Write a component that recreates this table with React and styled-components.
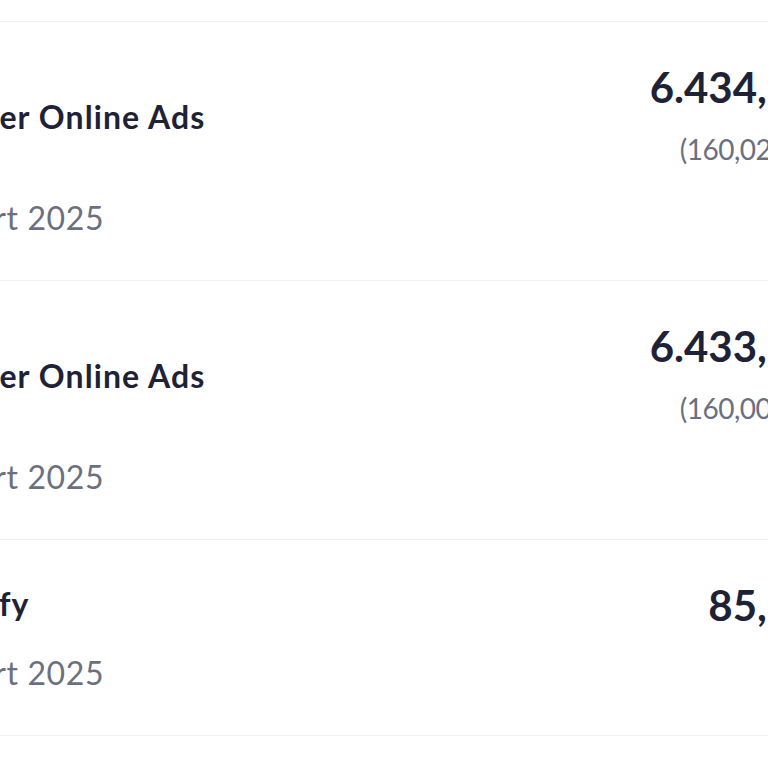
import styled, { createGlobalStyle } from "styled-components";

const GlobalStyle = createGlobalStyle`
  html, body {
    margin: 0;
    padding: 0;
    background: #ffffff;
    overflow: hidden;
  }
  body {
    font-family: "Lato", "Noto Sans", sans-serif;
  }
`;

const transactions = [
  {
    id: 1,
    title: "Twitter Online Ads",
    date: "5 Mart 2025",
    amount: "6.434,52₺",
    converted: "(160,02 USD)",
    offset: 36,
    gap: 63,
  },
  {
    id: 2,
    title: "Twitter Online Ads",
    date: "5 Mart 2025",
    amount: "6.433,72₺",
    converted: "(160,00 USD)",
    offset: 36,
    gap: 63,
  },
  {
    id: 3,
    title: "Spotify",
    date: "5 Mart 2025",
    amount: "85,99₺",
    offset: 5,
    gap: 31,
  },
];

function App() {
  return (
    <>
      <GlobalStyle />
      <Page>
        <List>
          {transactions.map((t) => (
            <Row key={t.id}>
              <Details $offset={t.offset} $gap={t.gap}>
                <Title>{t.title}</Title>
                <DateText>{t.date}</DateText>
              </Details>
              <Amounts>
                <Amount>{t.amount}</Amount>
                {t.converted && <Converted>{t.converted}</Converted>}
              </Amounts>
            </Row>
          ))}
        </List>
      </Page>
    </>
  );
}

export default App;

const Page = styled.div`
  width: 768px;
  height: 768px;
  overflow: hidden;
  padding-top: 21px;
  box-sizing: border-box;
`;

const List = styled.div`
  width: 920px;
  margin-left: -80px;
  border-top: 1px solid #eef0f3;
`;

const Row = styled.div`
  display: flex;
  justify-content: space-between;
  align-items: flex-start;
  padding: 40px 0 43px;
  border-bottom: 1px solid #eef0f3;
`;

const Details = styled.div`
  display: flex;
  flex-direction: column;
  gap: ${(p) => p.$gap}px;
  margin-top: ${(p) => p.$offset}px;
`;

const Title = styled.div`
  font-size: 32px;
  line-height: 38px;
  font-weight: 700;
  letter-spacing: 1.1px;
  color: #1e2236;
  white-space: nowrap;
`;

const DateText = styled.div`
  font-size: 32px;
  line-height: 38px;
  letter-spacing: 0.6px;
  color: #6b7080;
  white-space: nowrap;
`;

const Amounts = styled.div`
  display: flex;
  flex-direction: column;
  align-items: flex-end;
  gap: 19px;
`;

const Amount = styled.div`
  font-size: 42px;
  line-height: 50px;
  font-weight: 700;
  color: #1e2236;
  white-space: nowrap;
`;

const Converted = styled.div`
  font-size: 28px;
  line-height: 36px;
  letter-spacing: -0.5px;
  color: #6b7080;
  white-space: nowrap;
`;
